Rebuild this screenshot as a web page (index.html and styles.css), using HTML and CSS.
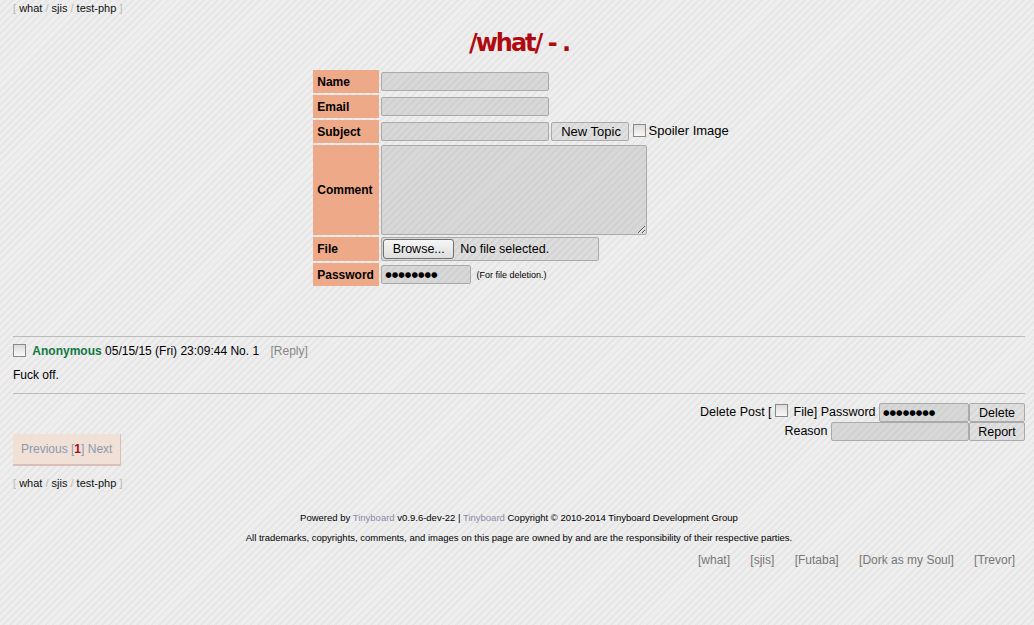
FILE: index.html
```html
<!DOCTYPE html>
<html lang="en">
<head>
    <meta charset="UTF-8">
    <title>/what/ - .</title>
    <link rel="stylesheet" href="styles.css">
</head>
<body>

<div class="boardlist">
    <span class="sub">[ <a href="#">what</a> / <a href="#">sjis</a> / <a href="#">test-php</a> ]</span>
</div>

<header>
    <h1>/what/ - .</h1>
</header>

<form class="post-form">
    <table>
        <tr>
            <th>Name</th>
            <td><input type="text" class="field"></td>
        </tr>
        <tr>
            <th>Email</th>
            <td><input type="text" class="field"></td>
        </tr>
        <tr>
            <th>Subject</th>
            <td class="subject-row">
                <input type="text" class="field"><button type="button" class="btn">New Topic</button>
                <label class="spoiler"><span class="box"></span>Spoiler Image</label>
            </td>
        </tr>
        <tr>
            <th>Comment</th>
            <td><textarea class="comment"></textarea></td>
        </tr>
        <tr>
            <th>File</th>
            <td>
                <div class="file-field">
                    <span class="browse">Browse...</span>
                    <span>No file selected.</span>
                </div>
            </td>
        </tr>
        <tr>
            <th>Password</th>
            <td class="pass-row">
                <input type="text" class="field pass dots" value="●●●●●●●●">
                <span class="unimportant">(For file deletion.)</span>
            </td>
        </tr>
    </table>
</form>

<hr>

<div class="thread">
    <p class="intro">
        <span class="box"></span>
        <span class="name">Anonymous</span>
        <span>05/15/15 (Fri) 23:09:44</span>
        <span>No. 1</span>
        <a href="#" class="reply">[Reply]</a>
    </p>
    <div class="body">Fuck off.</div>
</div>

<hr>

<div class="bottom">
    <div class="pages">Previous [<strong>1</strong>] Next</div>

    <div class="delete">
        <div class="delete-row">
            Delete Post [ <span class="box"></span> File] Password
            <input type="text" class="field small dots" value="●●●●●●●●"><button type="button" class="btn side">Delete</button>
        </div>
        <div class="delete-row">
            Reason
            <input type="text" class="field reason"><button type="button" class="btn side">Report</button>
        </div>
    </div>
</div>

<div class="boardlist bottom-nav">
    <span class="sub">[ <a href="#">what</a> / <a href="#">sjis</a> / <a href="#">test-php</a> ]</span>
</div>

<footer>
    <p>Powered by <a href="#">Tinyboard</a> v0.9.6-dev-22 | <a href="#">Tinyboard</a> Copyright &copy; 2010-2014 Tinyboard Development Group</p>
    <p>All trademarks, copyrights, comments, and images on this page are owned by and are the responsibility of their respective parties.</p>
</footer>

<div class="styles">
    <a href="#">[what]</a>
    <a href="#">[sjis]</a>
    <a href="#">[Futaba]</a>
    <a href="#">[Dork as my Soul]</a>
    <a href="#">[Trevor]</a>
</div>

</body>
</html>
```

FILE: styles.css
```css
html {
    background-color: #eee;
    background-image: repeating-linear-gradient(-45deg, #eeeeee 0, #eeeeee 3px, #e6e6e6 3px, #e6e6e6 5px);
}

body {
    margin: 0;
    padding: 0 9px 0 13px;
    font-family: "Liberation Sans", Arial, sans-serif;
    font-size: 12px;
    color: #000;
    min-height: 625px;
}

a {
    text-decoration: none;
}

.boardlist {
    font-size: 11px;
    color: #bbb;
    padding-top: 2px;
    height: 14px;
}

.boardlist a {
    color: #111;
}

header h1 {
    margin: 0;
    padding-top: 13px;
    text-align: center;
    font-family: "DejaVu Sans", sans-serif;
    font-size: 24px;
    font-weight: bold;
    letter-spacing: -2px;
    color: #af0a0f;
    height: 39px;
}

.post-form {
    height: 268px;
    padding-left: 4px;
}

.post-form table {
    margin: 0 auto;
    border-spacing: 2px;
}

.post-form th {
    background-color: #eea988;
    width: 58px;
    padding: 0 4px;
    text-align: left;
    font-size: 12px;
    height: 23px;
}

.post-form td {
    padding: 0;
    vertical-align: middle;
}

.field {
    box-sizing: border-box;
    width: 168px;
    height: 19px;
    border: 1px solid #aaa;
    border-radius: 2px;
    background: rgba(0, 0, 0, 0.09);
    font-family: inherit;
    font-size: 12px;
    padding: 0 3px;
    margin: 0;
    vertical-align: middle;
}

.dots {
    font-family: "DejaVu Sans", sans-serif;
    font-size: 7.5px;
    color: #000;
    padding-left: 3px;
}

.pass {
    width: 90px;
}

.btn {
    box-sizing: border-box;
    height: 19px;
    border: 1px solid #aaa;
    border-radius: 2px;
    background: rgba(0, 0, 0, 0.06);
    font-family: inherit;
    font-size: 12px;
    padding: 0 9px;
    margin: 0;
    vertical-align: middle;
    color: #000;
}

.subject-row {
    white-space: nowrap;
}

.subject-row .btn {
    width: 78px;
    margin-left: 2px;
    font-size: 13px;
}

.box {
    display: inline-block;
    box-sizing: border-box;
    width: 13px;
    height: 13px;
    border: 1px solid #888;
    background: linear-gradient(#dcdcdc, #f8f8f8);
    vertical-align: -2px;
}

.spoiler {
    font-size: 13px;
}

.spoiler .box {
    margin-right: 3px;
}

.comment {
    box-sizing: border-box;
    display: block;
    width: 266px;
    height: 90px;
    border: 1px solid #aaa;
    border-radius: 2px;
    background: rgba(0, 0, 0, 0.09);
    margin: 0;
    resize: both;
}

.file-field {
    box-sizing: border-box;
    width: 218px;
    height: 24px;
    border: 1px solid #aaa;
    border-radius: 2px;
    background: rgba(0, 0, 0, 0.07);
    display: flex;
    align-items: center;
    gap: 6px;
    padding-left: 1px;
    font-size: 12.5px;
}

.browse {
    box-sizing: border-box;
    width: 71px;
    height: 20px;
    line-height: 18px;
    text-align: center;
    border: 1px solid #707070;
    border-radius: 3px;
    background: linear-gradient(#f6f6f6, #dedede);
}

.unimportant {
    font-size: 9px;
    margin-left: 2px;
}

hr {
    border: none;
    border-top: 1px solid #bbb;
    margin: 0;
}

.thread {
    height: 56px;
}

.intro {
    margin: 0;
    padding-top: 7px;
    height: 15px;
}

.intro .box {
    margin-right: 3px;
}

.name {
    color: #117743;
    font-weight: bold;
}

.reply {
    color: #888;
    margin-left: 8px;
}

.body {
    margin-top: 9px;
}

.bottom {
    display: flex;
    justify-content: space-between;
    align-items: flex-start;
    padding-top: 9px;
}

.pages {
    margin-top: 31px;
    background: #f0e0d6;
    border-right: 1px solid #d9bfb7;
    border-bottom: 2px solid #d9bfb7;
    color: #8a9bb0;
    font-size: 12px;
    padding: 8px;
    line-height: 14px;
}

.pages strong {
    color: #af0a0f;
}

.delete {
    display: flex;
    flex-direction: column;
    align-items: flex-end;
    font-size: 12.5px;
}

.delete-row {
    white-space: nowrap;
    height: 19px;
}

.delete-row .box {
    vertical-align: -1px;
    margin-right: 2px;
}

.small {
    width: 90px;
}

.reason {
    width: 138px;
}

.side {
    width: 56px;
    padding: 0;
    font-size: 12.5px;
}

.bottom-nav {
    margin-top: 9px;
}

footer {
    font-size: 9.5px;
    text-align: center;
    margin-top: 21px;
}

footer p {
    margin: 0 0 9px 0;
    line-height: 11px;
}

footer a {
    color: #8a8aa8;
}

.styles {
    text-align: right;
    padding-right: 10px;
    margin-top: 10px;
}

.styles a {
    color: #777;
    margin-left: 17px;
}
```
